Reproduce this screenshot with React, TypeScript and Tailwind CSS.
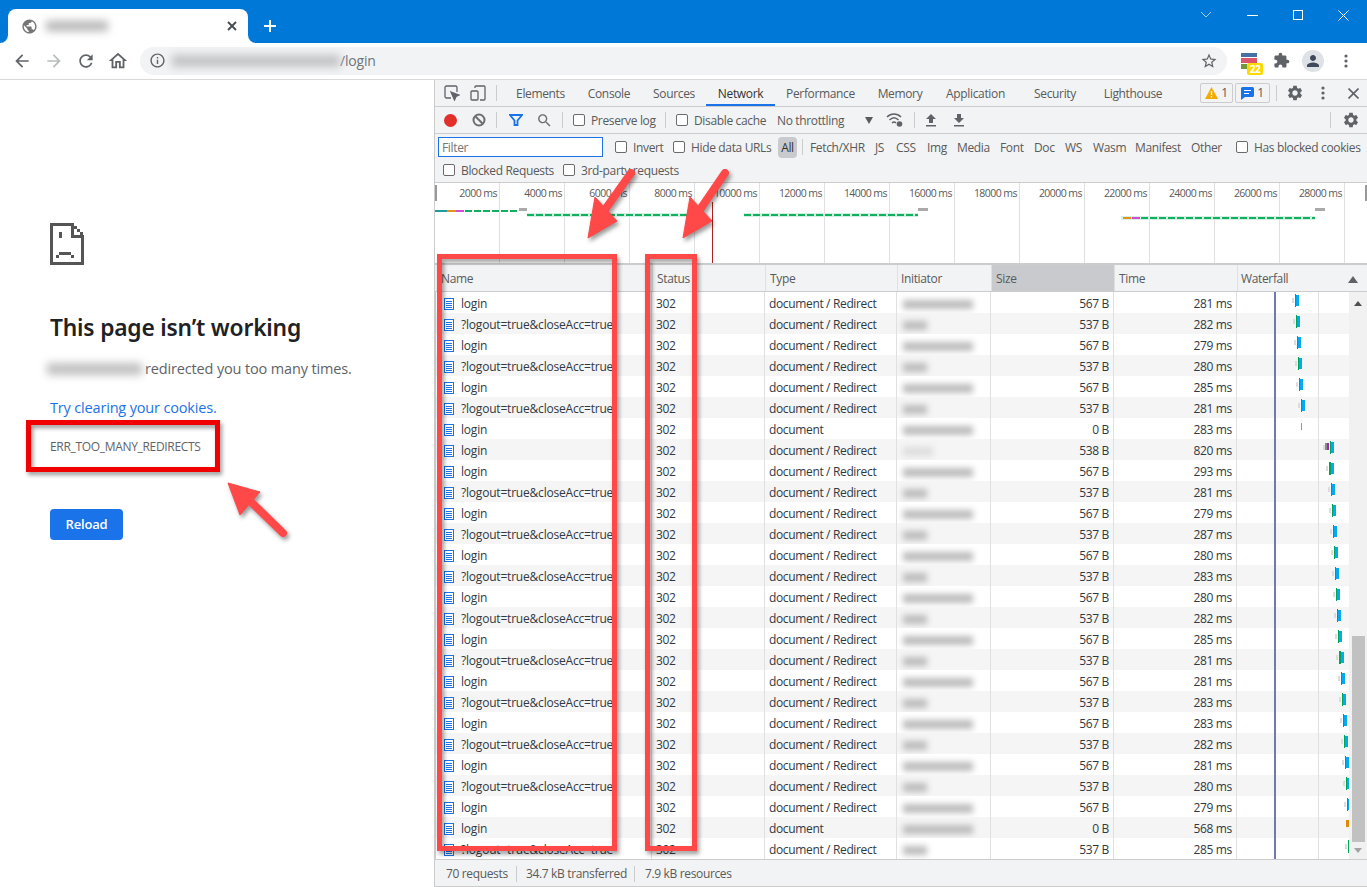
import React from "react";

const P = {
  back: "M20 11H7.83l5.59-5.59L12 4l-8 8 8 8 1.41-1.41L7.83 13H20v-2z",
  forward: "M12 4l-1.41 1.41L16.17 11H4v2h12.17l-5.58 5.59L12 20l8-8z",
  reload: "M17.65 6.35C16.2 4.9 14.21 4 12 4c-4.42 0-7.99 3.58-7.99 8s3.57 8 7.99 8c3.73 0 6.84-2.55 7.73-6h-2.08c-.82 2.33-3.04 4-5.65 4-3.31 0-6-2.69-6-6s2.69-6 6-6c1.66 0 3.14.69 4.22 1.78L13 11h7V4l-2.35 2.35z",
  home: "M12 5.69l5 4.5V18h-2v-6H9v6H7v-7.81l5-4.5M12 3L2 12h3v8h6v-6h2v6h6v-8h3L12 3z",
  info: "M11 7h2v2h-2zm0 4h2v6h-2zm1-9C6.48 2 2 6.48 2 12s4.48 10 10 10 10-4.48 10-10S17.52 2 12 2zm0 18c-4.41 0-8-3.59-8-8s3.59-8 8-8 8 3.59 8 8-3.59 8-8 8z",
  star: "M22 9.24l-7.19-.62L12 2 9.19 8.63 2 9.24l5.46 4.73L5.82 21 12 17.27 18.18 21l-1.63-7.03L22 9.24zM12 15.4l-3.76 2.27 1-4.28-3.32-2.88 4.38-.38L12 6.1l1.71 4.04 4.38.38-3.32 2.88 1 4.28L12 15.4z",
  ext: "M20.5 11H19V7c0-1.1-.9-2-2-2h-4V3.5C13 2.12 11.88 1 10.5 1S8 2.12 8 3.5V5H4c-1.1 0-1.99.9-1.99 2v3.8H3.5c1.49 0 2.7 1.21 2.7 2.7s-1.21 2.7-2.7 2.7H2V20c0 1.1.9 2 2 2h3.8v-1.5c0-1.49 1.21-2.7 2.7-2.7 1.49 0 2.7 1.21 2.7 2.7V22H17c1.1 0 2-.9 2-2v-4h1.5c1.38 0 2.5-1.12 2.5-2.5S21.88 11 20.5 11z",
  gear: "M19.14 12.94c.04-.3.06-.61.06-.94 0-.32-.02-.64-.07-.94l2.03-1.58c.18-.14.23-.41.12-.61l-1.92-3.32c-.12-.22-.37-.29-.59-.22l-2.39.96c-.5-.38-1.03-.7-1.62-.94l-.36-2.54c-.04-.24-.24-.41-.48-.41h-3.84c-.24 0-.43.17-.47.41l-.36 2.54c-.59.24-1.13.57-1.62.94l-2.39-.96c-.22-.08-.47 0-.59.22L2.74 8.87c-.12.21-.08.47.12.61l2.03 1.58c-.05.3-.09.63-.09.94s.02.64.07.94l-2.03 1.58c-.18.14-.23.41-.12.61l1.92 3.32c.12.22.37.29.59.22l2.39-.96c.5.38 1.03.7 1.62.94l.36 2.54c.05.24.24.41.48.41h3.84c.24 0 .44-.17.47-.41l.36-2.54c.59-.24 1.13-.56 1.62-.94l2.39.96c.22.08.47 0 .59-.22l1.92-3.32c.12-.22.07-.47-.12-.61l-2.01-1.58zM12 15.6c-1.98 0-3.6-1.62-3.6-3.6s1.62-3.6 3.6-3.6 3.6 1.62 3.6 3.6-1.62 3.6-3.6 3.6z",
  person: "M12 12c2.21 0 4-1.79 4-4s-1.79-4-4-4-4 1.79-4 4 1.79 4 4 4zm0 2c-2.67 0-8 1.34-8 4v2h16v-2c0-2.66-5.33-4-8-4z",
  globe: "M12 2C6.48 2 2 6.48 2 12s4.48 10 10 10 10-4.48 10-10S17.52 2 12 2zm-1 17.93c-3.95-.49-7-3.85-7-7.93 0-.62.08-1.21.21-1.79L9 15v1c0 1.1.9 2 2 2v1.93zm6.9-2.54c-.26-.81-1-1.39-1.9-1.39h-1v-3c0-.55-.45-1-1-1H8v-2h2c.55 0 1-.45 1-1V7h2c1.1 0 2-.9 2-2v-.41c2.93 1.19 5 4.06 5 7.41 0 2.08-.8 3.97-2.1 5.39z",
  search: "M15.5 14h-.79l-.28-.27C15.41 12.59 16 11.11 16 9.5 16 5.91 13.09 3 9.5 3S3 5.91 3 9.5 5.91 16 9.5 16c1.61 0 3.09-.59 4.23-1.57l.27.28v.79l5 4.99L20.49 19l-4.99-5zm-6 0C7.01 14 5 11.99 5 9.5S7.01 5 9.5 5 14 7.01 14 9.5 11.99 14 9.5 14z",
};

function Ic({ d, s, c, className = "" }: { d: string; s: number; c: string; className?: string }) {
  return (
    <svg width={s} height={s} viewBox="0 0 24 24" fill={c} className={"shrink-0 " + className}>
      <path d={d} />
    </svg>
  );
}

function Dots({ c = "#5f6368" }: { c?: string }) {
  return (
    <svg width="4" height="14" viewBox="0 0 4 14" fill={c} className="shrink-0">
      <circle cx="2" cy="2" r="1.6" />
      <circle cx="2" cy="7" r="1.6" />
      <circle cx="2" cy="12" r="1.6" />
    </svg>
  );
}

function Check({ label, className = "" }: { label: string; className?: string }) {
  return (
    <div className={"flex items-center shrink-0 " + className}>
      <span className="w-[12px] h-[12px] rounded-[2px] border border-[#6b6b6b] bg-white shrink-0" />
      <span className="ml-[6px] pt-[1px] text-[#5a5a5a] whitespace-nowrap">{label}</span>
    </div>
  );
}

const Sep = ({ className = "" }: { className?: string }) => <span className={"w-px h-[16px] bg-[#ccc] shrink-0 " + className} />;

const tabs = [
  { t: "Elements", c: "w-[71px] border-transparent" },
  { t: "Console", c: "w-[66px] border-transparent" },
  { t: "Sources", c: "w-[64px] border-transparent" },
  { t: "Network", c: "w-[69px] border-[#1a73e8] text-[#333]" },
  { t: "Performance", c: "w-[91px] border-transparent" },
  { t: "Memory", c: "w-[68px] border-transparent" },
  { t: "Application", c: "w-[83px] border-transparent" },
  { t: "Security", c: "w-[76px] border-transparent" },
  { t: "Lighthouse", c: "w-[80px] border-transparent" },
];

const chips = [
  { t: "Fetch/XHR", c: "w-[65px]" },
  { t: "JS", c: "w-[21px]" },
  { t: "CSS", c: "w-[31px]" },
  { t: "Img", c: "w-[30px]" },
  { t: "Media", c: "w-[43px]" },
  { t: "Font", c: "w-[34px]" },
  { t: "Doc", c: "w-[31px]" },
  { t: "WS", c: "w-[28px]" },
  { t: "Wasm", c: "w-[42px]" },
  { t: "Manifest", c: "w-[56px]" },
  { t: "Other", c: "w-[45px]" },
];

const marks = ["2000", "4000", "6000", "8000", "10000", "12000", "14000", "16000", "18000", "20000", "22000", "24000", "26000", "28000"];

type Row = { n: 0 | 1; size: string; time: string; redirect: boolean; x: number; kind?: "thin" | "multi" | "thick" | "orange" | "end" };
const L = 0 as const;
const Q = 1 as const;
const rows: Row[] = [
  { n: L, size: "567 B", time: "281 ms", redirect: true, x: 1295 },
  { n: Q, size: "537 B", time: "282 ms", redirect: true, x: 1296 },
  { n: L, size: "567 B", time: "279 ms", redirect: true, x: 1297 },
  { n: Q, size: "537 B", time: "280 ms", redirect: true, x: 1298 },
  { n: L, size: "567 B", time: "285 ms", redirect: true, x: 1299 },
  { n: Q, size: "537 B", time: "281 ms", redirect: true, x: 1301 },
  { n: L, size: "0 B", time: "283 ms", redirect: false, x: 1301, kind: "thin" },
  { n: L, size: "538 B", time: "820 ms", redirect: true, x: 1330, kind: "multi" },
  { n: L, size: "567 B", time: "293 ms", redirect: true, x: 1329, kind: "thick" },
  { n: Q, size: "537 B", time: "281 ms", redirect: true, x: 1331 },
  { n: L, size: "567 B", time: "279 ms", redirect: true, x: 1332 },
  { n: Q, size: "537 B", time: "287 ms", redirect: true, x: 1333 },
  { n: L, size: "567 B", time: "280 ms", redirect: true, x: 1334 },
  { n: Q, size: "537 B", time: "283 ms", redirect: true, x: 1335 },
  { n: L, size: "567 B", time: "280 ms", redirect: true, x: 1336 },
  { n: Q, size: "537 B", time: "282 ms", redirect: true, x: 1337 },
  { n: L, size: "567 B", time: "285 ms", redirect: true, x: 1338 },
  { n: Q, size: "537 B", time: "281 ms", redirect: true, x: 1339, kind: "thick" },
  { n: L, size: "567 B", time: "281 ms", redirect: true, x: 1341 },
  { n: Q, size: "537 B", time: "283 ms", redirect: true, x: 1342 },
  { n: L, size: "567 B", time: "283 ms", redirect: true, x: 1343 },
  { n: Q, size: "537 B", time: "282 ms", redirect: true, x: 1344 },
  { n: L, size: "567 B", time: "281 ms", redirect: true, x: 1345 },
  { n: Q, size: "537 B", time: "280 ms", redirect: true, x: 1346 },
  { n: L, size: "567 B", time: "279 ms", redirect: true, x: 1347 },
  { n: L, size: "0 B", time: "568 ms", redirect: false, x: 1346, kind: "orange" },
  { n: Q, size: "537 B", time: "285 ms", redirect: true, x: 1348, kind: "end" },
];

function Bars({ r }: { r: Row }) {
  const x = r.x - 1237;
  return (
    <svg width="112" height="21" className="shrink-0" shapeRendering="crispEdges">
      <rect x="37" y="0" width="2" height="21" fill="#7079b1" />
      <rect x="81" y="0" width="1" height="21" fill="#e0e0e0" />
      {r.kind === "thin" && <rect x={x} y="5" width="1" height="7" fill="#e08a1e" />}
      {r.kind === "orange" && <rect x={x} y="3" width="3" height="7" fill="#e08a00" />}
      {r.kind === "multi" && (
        <>
          <rect x={x - 7} y="6" width="2" height="5" fill="#dcdcdc" />
          <rect x={x - 5} y="4" width="2" height="7" fill="#8a8a8a" />
          <rect x={x - 3} y="4" width="2" height="7" fill="#9c27b0" />
          <rect x={x} y="2" width="1" height="13" fill="#00a651" />
          <rect x={x + 1} y="3" width="3" height="11" fill="#03a9f4" />
        </>
      )}
      {r.kind === "thick" && (
        <>
          <rect x={x - 3} y="6" width="2" height="5" fill="#dcdcdc" />
          <rect x={x} y="2" width="2" height="13" fill="#00a651" />
          <rect x={x + 2} y="3" width="3" height="11" fill="#03a9f4" />
        </>
      )}
      {r.kind === "end" && (
        <>
          <rect x={x - 3} y="6" width="2" height="5" fill="#dcdcdc" />
          <rect x={x} y="2" width="1" height="13" fill="#00a651" />
        </>
      )}
      {!r.kind && (
        <>
          <rect x={x - 3} y="6" width="2" height="5" fill="#dcdcdc" />
          <rect x={x} y="2" width="1" height="13" fill="#00a651" />
          <rect x={x + 1} y="3" width="3" height="11" fill="#03a9f4" />
        </>
      )}
    </svg>
  );
}

function DocIcon() {
  return (
    <svg width="10" height="12" viewBox="0 0 10 12" className="shrink-0" shapeRendering="crispEdges">
      <rect x="0.5" y="0.5" width="9" height="11" fill="#fff" stroke="#1a73e8" />
      <path d="M2 3h6M2 5h6M2 7h6M2 9h6" stroke="#1a73e8" />
    </svg>
  );
}

const cellB = "border-r border-[#e0e0e0] h-full flex items-center overflow-hidden whitespace-nowrap shrink-0";

function Overlay() {
  return (
    <svg width="1367" height="887" className="absolute left-0 top-0 pointer-events-none drop-shadow-[2px_3px_2px_rgba(0,0,0,0.4)]">
      <g fill="none" stroke="#ff4848" strokeWidth="5">
        <rect x="439.5" y="256.5" width="175" height="592" />
        <rect x="647.5" y="256.5" width="47" height="592" />
      </g>
      <rect x="28.5" y="422.5" width="189" height="47" fill="none" stroke="#f00000" strokeWidth="5" />
      <g fill="#ff4848" stroke="#ff4848">
        <path d="M631 173L604 211" strokeWidth="8" strokeLinecap="round" />
        <path d="M588 238L617 221L595 197Z" strokeWidth="1" />
        <path d="M725 173L699 211" strokeWidth="8" strokeLinecap="round" />
        <path d="M683 238L712 221L690 197Z" strokeWidth="1" />
        <path d="M283 533L248 499" strokeWidth="8" strokeLinecap="round" />
        <path d="M228 483L260 492L240 515Z" strokeWidth="1" />
      </g>
    </svg>
  );
}

function SadPage() {
  return (
    <svg width="34" height="42" viewBox="0 0 34 42" shapeRendering="crispEdges" fill="#555">
      <path d="M0 0h24v3H3v36h28V12h3v30H0zM24 3h3v3h-3zM27 6h3v3h-3zM30 9h3v3h-3zM21 3h3v9h9v3H21zM9 9h3v6H9zM9 29h12v3H9zM6 32h3v3H6zM21 32h3v3h-3z" />
    </svg>
  );
}

export default function App() {
  return (
    <div className="relative w-[1367px] h-[887px] overflow-hidden bg-white flex flex-col font-['Open_Sans','Noto_Sans',sans-serif] tracking-[-0.35px] text-[12px] text-[#303942]">
      {/* Tab strip */}
      <div className="h-[43px] shrink-0 bg-[#0078d7] flex items-end pl-[8px] relative">
        <div className="relative w-[240px] h-[34px] bg-white rounded-t-[8px] flex items-center pl-[13px] pr-[10px]">
          <svg width="8" height="8" className="absolute -left-[8px] bottom-0"><path d="M8 0v8H0a8 8 0 0 0 8-8z" fill="#fff" /></svg>
          <svg width="8" height="8" className="absolute -right-[8px] bottom-0"><path d="M0 0v8h8a8 8 0 0 1-8-8z" fill="#fff" /></svg>
          <Ic d={P.globe} s={17} c="#757575" />
          <span className="ml-[8px] w-[62px] h-[10px] bg-[#b5b5b5] blur-[4px]" />
          <svg width="10" height="10" viewBox="0 0 10 10" className="ml-auto mr-[1px]" stroke="#45494d" strokeWidth="1.8"><path d="M1 1l8 8M9 1l-8 8" /></svg>
        </div>
        <svg width="14" height="14" viewBox="0 0 14 14" className="ml-[15px] mb-[10px]" stroke="#fff" strokeWidth="2"><path d="M7 1v12M1 7h12" /></svg>
        <div className="ml-auto self-start h-[30px] flex items-center">
          <svg width="12" height="8" viewBox="0 0 12 8" fill="none" stroke="#a8d2f2"><path d="M1 1l5 5 5-5" /></svg>
          <span className="ml-[35px] w-[11px] h-px bg-white" />
          <span className="ml-[35px] w-[10px] h-[10px] border border-white" />
          <svg width="11" height="11" viewBox="0 0 11 11" className="ml-[35px] mr-[18px]" stroke="#fff" fill="none"><path d="M.5.5l10 10M10.5.5l-10 10" /></svg>
        </div>
      </div>

      {/* Toolbar */}
      <div className="h-[37px] shrink-0 bg-white border-b border-[#d9d9d9] flex items-center pb-[1px] pl-[12px]">
        <Ic d={P.back} s={20} c="#5f6368" />
        <Ic d={P.forward} s={20} c="#babcbe" className="ml-[12px]" />
        <Ic d={P.reload} s={20} c="#5f6368" className="ml-[12px]" />
        <Ic d={P.home} s={22} c="#5f6368" className="ml-[11px]" />
        <div className="ml-[11px] w-[1087px] h-[28px] rounded-[14px] bg-[#f1f3f4] flex items-center pl-[9px] pr-[9px]">
          <Ic d={P.info} s={17} c="#5f6368" />
          <span className="ml-[6px] w-[168px] h-[12px] bg-[#c2c3c4] blur-[4px]" />
          <span className="text-[14px] text-[#70757a] tracking-[-0.2px]">/login</span>
          <Ic d={P.star} s={18} c="#5f6368" className="ml-auto" />
        </div>
        <div className="relative ml-[14px] w-[16px] h-[16px] flex flex-col gap-[1px]">
          <span className="h-[5px] bg-[#4472a8]" />
          <span className="h-[5px] bg-[#d9566c]" />
          <span className="h-[5px] w-[6px] bg-[#6e9a3c]" />
          <span className="absolute left-[6px] top-[10px] w-[16px] h-[12px] bg-[#ffd800] rounded-[2px] text-white text-[10px] font-bold leading-[12px] text-center">22</span>
        </div>
        <Ic d={P.ext} s={17} c="#5f6368" className="ml-[16px]" />
        <div className="ml-[12px] w-[22px] h-[22px] rounded-full bg-[#dee1e6] flex items-center justify-center">
          <Ic d={P.person} s={18} c="#3c4a5c" />
        </div>
        <span className="ml-[20px]"><Dots /></span>
      </div>

      <div className="flex-1 flex min-h-0">
        {/* Error page */}
        <div className="w-[434px] shrink-0 pl-[50px] pt-[143px] text-[#5f6368] tracking-normal">
          <SadPage />
          <h1 className="mt-[48px] text-[22.8px] leading-[30px] font-semibold text-[#202124] tracking-[-0.2px] font-['Noto_Sans',sans-serif]">This page isn’t working</h1>
          <div className="mt-[16px] h-[20px] flex items-center text-[14.5px] tracking-[-0.15px]">
            <span className="-ml-[3px] w-[95px] h-[12px] bg-[#c0c0c0] blur-[4px] shrink-0" />
            <span className="ml-[3px] whitespace-nowrap">redirected you too many times.</span>
          </div>
          <div className="mt-[19px] h-[20px] text-[14.5px] leading-[20px] tracking-[-0.17px] text-[#1a73e8]">Try clearing your cookies.</div>
          <div className="mt-[19px] h-[20px] text-[12px] leading-[20px] tracking-[-0.32px]">ERR_TOO_MANY_REDIRECTS</div>
          <button className="mt-[52px] w-[73px] h-[31px] rounded-[4px] pt-[1px] bg-[#1a73e8] text-white text-[13px] font-semibold tracking-[-0.2px]">Reload</button>
        </div>

        {/* DevTools */}
        <div className="flex-1 min-w-0 border-l border-[#ccc] flex flex-col bg-[#f1f3f4] text-[#5a5a5a]">
          {/* tabs */}
          <div className="h-[27px] shrink-0 border-b border-[#ccc] flex items-center pl-[9px]">
            <svg width="16" height="16" viewBox="0 0 16 16" fill="none" stroke="#5f6368" className="shrink-0" strokeWidth="1.3">
              <path d="M7 13H2.5A1.5 1.5 0 0 1 1 11.5v-9A1.5 1.5 0 0 1 2.5 1h9A1.5 1.5 0 0 1 13 2.5V7" />
              <path d="M7 7l8 3-3 1.5L10.5 15z" fill="#5f6368" />
            </svg>
            <svg width="16" height="16" viewBox="0 0 16 16" fill="none" stroke="#5f6368" className="ml-[10px] shrink-0" strokeWidth="1.3">
              <rect x="1" y="6" width="7" height="9" rx="1" />
              <path d="M5 3V2a1 1 0 0 1 1-1h8a1 1 0 0 1 1 1v12a1 1 0 0 1-1 1h-4" />
            </svg>
            <Sep className="ml-[10px]" />
            <div className="ml-[8px] h-full flex">
              {tabs.map((t) => (
                <div key={t.t} className={"flex items-center justify-center whitespace-nowrap h-full pt-[4px] border-b-2 " + t.c}>{t.t}</div>
              ))}
            </div>
            <div className="ml-[27px] w-[33px] h-[20px] border border-[#ccc] rounded-[2px] flex items-center justify-center gap-[3px]">
              <svg width="13" height="12" viewBox="0 0 13 12"><path d="M6.5 0L13 12H0z" fill="#f2ab00" /><path d="M6.5 4v4M6.5 9v1.5" stroke="#fff" strokeWidth="1.3" /></svg>
              <span>1</span>
            </div>
            <div className="ml-[2px] w-[35px] h-[20px] border border-[#ccc] rounded-[2px] flex items-center justify-center gap-[3px]">
              <svg width="13" height="13" viewBox="0 0 13 13"><path d="M1.5 0h10A1.5 1.5 0 0 1 13 1.5v7A1.5 1.5 0 0 1 11.5 10H4l-4 3V1.5A1.5 1.5 0 0 1 1.5 0z" fill="#1a73e8" /><path d="M3 3.5h7M3 6.5h5" stroke="#fff" /></svg>
              <span>1</span>
            </div>
            <Sep className="ml-[6px]" />
            <Ic d={P.gear} s={18} c="#5f6368" className="ml-[9px]" />
            <span className="ml-[17px]"><Dots /></span>
            <svg width="11" height="11" viewBox="0 0 11 11" stroke="#5f6368" strokeWidth="1.6" className="ml-[23px] shrink-0"><path d="M.5.5l10 10M10.5.5l-10 10" /></svg>
          </div>

          {/* network toolbar */}
          <div className="h-[27px] shrink-0 border-b border-[#ccc] flex items-center pl-[9px]">
            <span className="w-[13px] h-[13px] rounded-full bg-[#e1302a] shrink-0" />
            <svg width="14" height="14" viewBox="0 0 14 14" fill="none" stroke="#6e6e6e" strokeWidth="2" className="ml-[15px] shrink-0">
              <circle cx="7" cy="7" r="5.5" /><path d="M3 3l8 8" />
            </svg>
            <Sep className="ml-[10px]" />
            <svg width="14" height="13" viewBox="0 0 14 13" className="ml-[12px] shrink-0" fill="none" stroke="#1a73e8" strokeWidth="1.8"><path d="M1 1h12L8.5 6.5V11h-3V6.5z" /></svg>
            <Ic d={P.search} s={17} c="#6e6e6e" className="ml-[13px]" />
            <Sep className="ml-[9px]" />
            <Check label="Preserve log" className="ml-[10px] w-[92px]" />
            <Sep />
            <Check label="Disable cache" className="ml-[10px] w-[101px]" />
            <span className="whitespace-nowrap w-[88px] pt-[2px]">No throttling</span>
            <span className="w-0 h-0 border-l-[4px] border-r-[4px] border-t-[7px] border-l-transparent border-r-transparent border-t-[#5a5a5a]" />
            <svg width="18" height="16" viewBox="0 0 18 16" fill="none" className="ml-[13px] shrink-0">
              <path d="M1 5c4-4 10-4 14 0M3.5 8c3-3 6-3 9 0M6 11c1.300-1.300 2.700-1.300 4 0" stroke="#5f6368" strokeWidth="1.5" />
              <circle cx="13.500" cy="12" r="2.800" fill="#5f6368" />
            </svg>
            <Sep className="ml-[10px]" />
            <svg width="12" height="13" viewBox="0 0 12 13" fill="#5f6368" className="ml-[10px] shrink-0"><path d="M6 0l5 5H8v4H4V5H1zM1 11h10v1.500H1z" /></svg>
            <svg width="12" height="13" viewBox="0 0 12 13" fill="#5f6368" className="ml-[16px] shrink-0"><path d="M4 0h4v4h3L6 9 1 4h3zM1 11h10v1.500H1z" /></svg>
            <Sep className="ml-[365px]" />
            <Ic d={P.gear} s={18} c="#5f6368" className="ml-[11px]" />
          </div>

          {/* filter rows */}
          <div className="h-[49px] shrink-0 border-b border-[#ccc] flex flex-col">
            <div className="h-[26px] flex items-center pl-[3px]">
              <div className="w-[165px] h-[20px] bg-white border border-[#1a73e8] flex items-center pl-[3px] pt-[2px] text-[#757575] shrink-0">Filter</div>
              <Check label="Invert" className="ml-[12px] w-[58px]" />
              <Check label="Hide data URLs" className="w-[105px]" />
              <span className="w-[19px] h-[21px] bg-[#c8cacd] rounded-[4px] flex items-center justify-center pt-[2px] text-[#333] shrink-0">All</span>
              <Sep className="ml-[5px]" />
              <div className="ml-[7px] flex h-full items-center pt-[2px]">
                {chips.map((c) => (
                  <span key={c.t} className={"whitespace-nowrap shrink-0 " + c.c}>{c.t}</span>
                ))}
              </div>
              <Check label="Has blocked cookies" />
            </div>
            <div className="h-[22px] flex items-center pl-[8px] pb-[2px]">
              <Check label="Blocked Requests" className="w-[120px]" />
              <Check label="3rd-party requests" />
            </div>
          </div>

          {/* overview */}
          <div className="relative h-[82px] shrink-0 bg-white border-b-2 border-[#ccc] flex text-[#5a5a5a] text-[10.5px]">
            {marks.map((m) => (
              <div key={m} className="w-[65px] h-full shrink-0 border-r border-[#e0e0e0] text-right pr-[2px] pt-[3px] whitespace-nowrap tracking-[-0.55px]">{m} ms</div>
            ))}
            <svg width="932" height="80" className="absolute left-0 top-0" shapeRendering="crispEdges">
              <rect x="0" y="2" width="2" height="16" fill="#999" />
              <rect x="930" y="2" width="2" height="16" fill="#999" />
              <rect x="0" y="27" width="12" height="2" fill="#1f9d9d" />
              <rect x="12" y="27" width="9" height="2" fill="#e8921e" />
              <rect x="21" y="27" width="8" height="2" fill="#d24ad6" />
              <path d="M30 28H84" stroke="#10b060" strokeWidth="2" strokeDasharray="7 2" />
              <rect x="84" y="25" width="8" height="3" fill="#aaa" />
              <rect x="92" y="30" width="168" height="4" fill="#d4f0e2" />
              <path d="M92 32H260" stroke="#10b060" strokeWidth="2" strokeDasharray="7 2" />
              <rect x="309" y="30" width="174" height="4" fill="#d4f0e2" />
              <path d="M309 32H483" stroke="#10b060" strokeWidth="2" strokeDasharray="7 2" />
              <rect x="483" y="25" width="10" height="3" fill="#aaa" />
              <rect x="277" y="19" width="1" height="61" fill="#b02020" />
              <rect x="686" y="33" width="194" height="4" fill="#d4f0e2" />
              <rect x="688" y="34" width="8" height="2" fill="#e8921e" />
              <rect x="697" y="34" width="8" height="2" fill="#d24ad6" />
              <path d="M706 35H880" stroke="#10b060" strokeWidth="2" strokeDasharray="7 2" />
              <rect x="880" y="25" width="10" height="3" fill="#aaa" />
            </svg>
          </div>

          {/* header */}
          <div className="h-[27px] shrink-0 border-b border-[#ccc] flex items-center pl-px">
            <div className={cellB + " w-[217px] pl-[5px] pt-[2px] border-[#ccc]"}>Name</div>
            <div className={cellB + " w-[113px] pl-[4px] pt-[2px] border-[#ccc]"}>Status</div>
            <div className={cellB + " w-[132px] pl-[4px] pt-[2px] border-[#ccc]"}>Type</div>
            <div className={cellB + " w-[94px] pl-[3px] pt-[2px] border-[#ccc]"}>Initiator</div>
            <div className={cellB + " w-[123px] pl-[4px] pt-[2px] bg-[#c8cacd] border-[#ccc]"}>Size</div>
            <div className={cellB + " w-[123px] pl-[4px] pt-[2px] border-[#ccc]"}>Time</div>
            <div className="flex-1 flex items-center justify-between pl-[3px] pr-[9px] pt-[2px]">
              <span>Waterfall</span>
              <span className="w-0 h-0 border-l-[5px] border-r-[5px] border-b-[7px] border-l-transparent border-r-transparent border-b-[#5f6368]" />
            </div>
          </div>

          {/* table */}
          <div className="flex-1 min-h-0 flex border-b border-[#ccc]">
            <div className="w-[914px] shrink-0 flex flex-col border-l border-[#ccc] text-[#303942]">
              {rows.map((r, i) => (
                <div key={i} className={"h-[21px] shrink-0 flex items-center " + (i % 2 ? "bg-[#f5f5f5]" : "bg-white")}>
                  <div className={cellB + " w-[216px] pl-[8px] pt-[3px]"}>
                    <DocIcon />
                    <span className="ml-[7px] tracking-[-0.2px]">{r.n === Q ? "?logout=true&closeAcc=true" : "login"}</span>
                  </div>
                  <div className={cellB + " w-[113px] pl-[4px] pt-[3px]"}>302</div>
                  <div className={cellB + " w-[132px] pl-[4px] pt-[3px]"}>{r.redirect ? "document / Redirect" : "document"}</div>
                  <div className={cellB + " w-[94px] pl-[6px] pt-[3px]"}>
                    <span className={"h-[9px] blur-[3px] " + (i === 7 ? "bg-[#ddd] w-[30px]" : r.n === Q ? "bg-[#bbb] w-[24px]" : "bg-[#bbb] w-[70px]")} />
                  </div>
                  <div className={cellB + " w-[123px] justify-end pr-[4px] pt-[3px]"}>{r.size}</div>
                  <div className={cellB + " w-[123px] justify-end pr-[4px] pt-[3px]"}>{r.time}</div>
                  <Bars r={r} />
                </div>
              ))}
            </div>
            <div className="flex-1 bg-[#f1f1f1] flex flex-col items-center pt-[9px]">
              <span className="w-0 h-0 border-l-[4px] border-r-[4px] border-b-[5px] border-l-transparent border-r-transparent border-b-[#505050]" />
              <span className="mt-[330px] w-[13px] h-[206px] bg-[#c1c1c1]" />
              <span className="mt-[6px] w-0 h-0 border-l-[4px] border-r-[4px] border-t-[5px] border-l-transparent border-r-transparent border-t-[#a3a3a3]" />
            </div>
          </div>

          {/* status bar */}
          <div className="h-[27px] shrink-0 flex items-center pl-[11px] pt-[2px] border-b border-[#ccc]">
            <span className="w-[70px] whitespace-nowrap">70 requests</span>
            <Sep />
            <span className="ml-[9px] w-[108px] whitespace-nowrap">34.7 kB transferred</span>
            <Sep />
            <span className="ml-[10px] whitespace-nowrap">7.9 kB resources</span>
          </div>
        </div>
      </div>
      <Overlay />
    </div>
  );
}
